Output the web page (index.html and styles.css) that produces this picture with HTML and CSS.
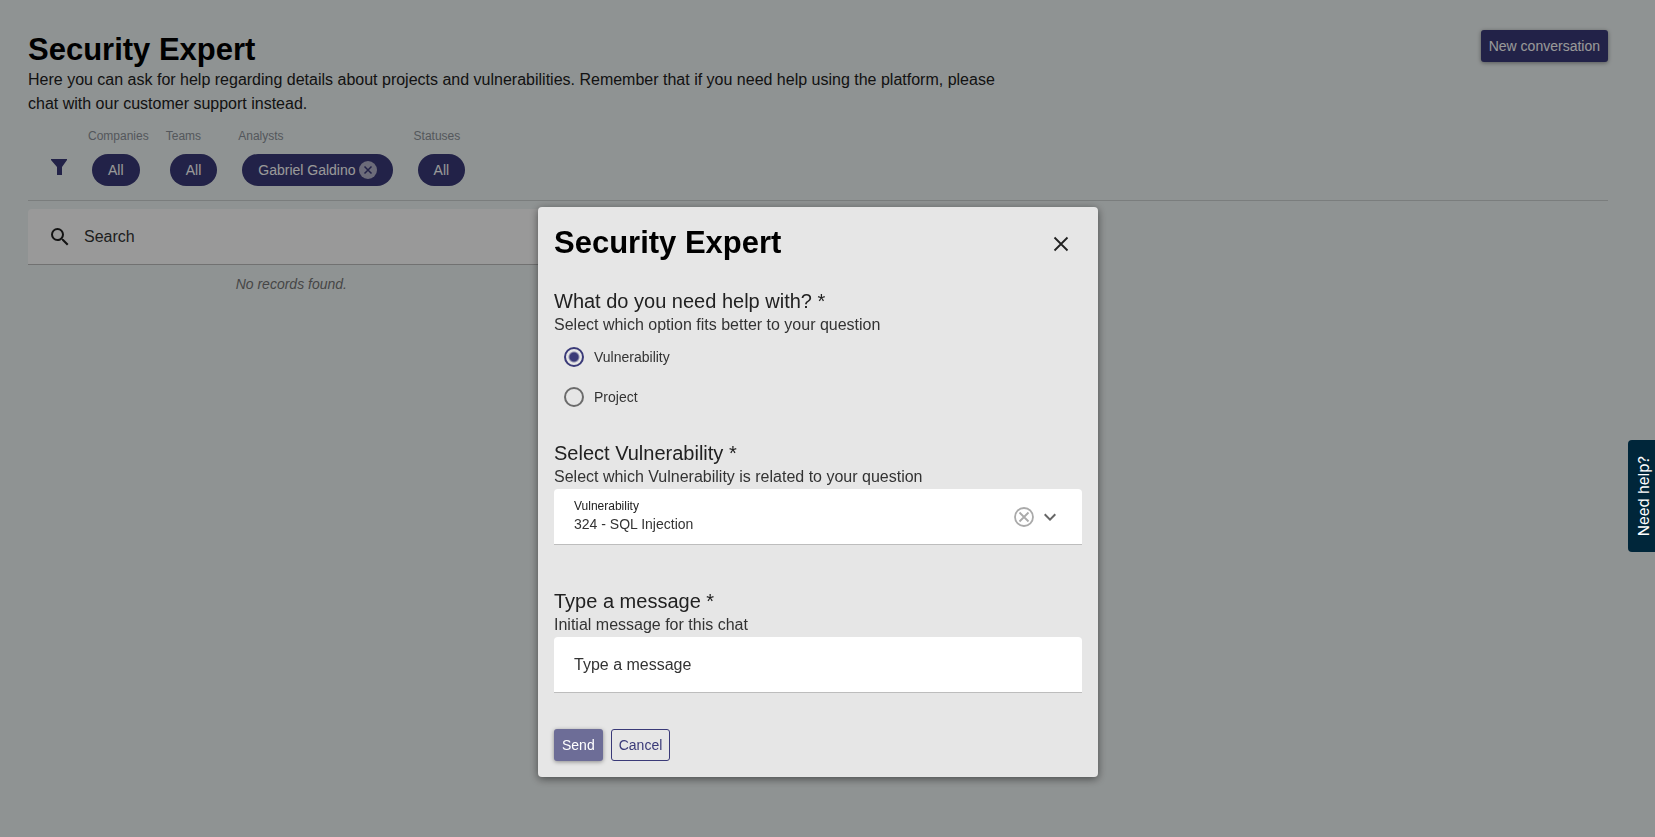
FILE: index.html
```html
<!DOCTYPE html>
<html lang="en">
<head>
<meta charset="utf-8">
<title>Security Expert</title>
<link rel="stylesheet" href="styles.css">
</head>
<body>
<main class="page">
  <header class="page-header">
    <div class="intro">
      <h1 class="title">Security Expert</h1>
      <p class="lead">Here you can ask for help regarding details about projects and vulnerabilities. Remember that if you need help using the platform, please chat with our customer support instead.</p>
    </div>
    <button class="btn btn-primary" type="button">New conversation</button>
  </header>
  <section class="filters">
    <svg class="filter-icon" viewBox="0 0 24 24" aria-hidden="true"><path d="M4 4h16v1l-5 7v8h-5v-8L4 5z"/></svg>
    <div class="filter"><span class="filter-label">Companies</span><button class="chip" type="button">All</button></div>
    <div class="filter"><span class="filter-label">Teams</span><button class="chip" type="button">All</button></div>
    <div class="filter"><span class="filter-label">Analysts</span><button class="chip" type="button">Gabriel Galdino<svg class="chip-remove" viewBox="0 0 18 18" aria-hidden="true"><circle cx="9" cy="9" r="9"/><path d="M5.5 5.5l7 7M12.5 5.5l-7 7"/></svg></button></div>
    <div class="filter"><span class="filter-label">Statuses</span><button class="chip" type="button">All</button></div>
  </section>
  <section class="list">
    <label class="search">
      <svg class="search-icon" viewBox="0 0 24 24" aria-hidden="true"><path d="M15.5 14h-.79l-.28-.27A6.471 6.471 0 0 0 16 9.5 6.5 6.5 0 1 0 9.5 16c1.61 0 3.09-.59 4.23-1.57l.27.28v.79l5 4.99L20.49 19l-4.99-5zm-6 0C7.01 14 5 11.99 5 9.5S7.01 5 9.5 5 14 7.01 14 9.5 11.99 14 9.5 14z"/></svg>
      <input class="search-input" type="search" placeholder="Search" aria-label="Search">
    </label>
    <p class="empty">No records found.</p>
  </section>
</main>

<div class="overlay">
  <form class="dialog" role="dialog" aria-modal="true" aria-labelledby="dialog-title">
    <header class="dialog-header">
      <h2 class="title" id="dialog-title">Security Expert</h2>
      <button class="close" type="button" aria-label="Close"><svg viewBox="0 0 24 24"><path d="M5.5 5.5l13 13M18.5 5.5l-13 13"/></svg></button>
    </header>
    <section class="question">
      <h3 class="heading">What do you need help with? *</h3>
      <p class="hint">Select which option fits better to your question</p>
      <label class="option"><input class="radio" type="radio" name="topic" checked>Vulnerability</label>
      <label class="option"><input class="radio" type="radio" name="topic">Project</label>
    </section>
    <section class="question">
      <h3 class="heading">Select Vulnerability *</h3>
      <p class="hint">Select which Vulnerability is related to your question</p>
      <div class="field">
        <div class="field-body">
          <label class="field-label" for="vulnerability">Vulnerability</label>
          <select class="field-select" id="vulnerability"><option>324 - SQL Injection</option></select>
        </div>
        <button class="clear" type="button" aria-label="Clear"><svg viewBox="0 0 24 24"><circle cx="12" cy="12" r="9"/><path d="M7.5 7.5l9 9M16.5 7.5l-9 9"/></svg></button>
        <svg class="chevron" viewBox="0 0 24 24" aria-hidden="true"><path d="M7.41 8.59L12 13.17l4.59-4.58L18 10l-6 6-6-6z"/></svg>
      </div>
      <div class="field-note"></div>
    </section>
    <section class="question">
      <h3 class="heading">Type a message *</h3>
      <p class="hint">Initial message for this chat</p>
      <div class="field"><input class="field-input" type="text" placeholder="Type a message" aria-label="Type a message"></div>
      <div class="field-note"></div>
    </section>
    <footer class="actions">
      <button class="btn btn-muted" type="submit">Send</button>
      <button class="btn btn-outline" type="button">Cancel</button>
    </footer>
  </form>
</div>
<button class="help-tab" type="button">Need help?</button>
</body>
</html>
```
FILE: styles.css
```css
:root {
  --primary: #3a3a78;
  --text: #212121;
}
* { box-sizing: border-box; }
body {
  margin: 0;
  min-height: 100vh;
  background: #eff5f5;
  color: var(--text);
  font: 16px/24px "Liberation Sans", Arial, sans-serif;
}
h1, h2, h3, p { margin: 0; }
button, input, select { font: inherit; color: inherit; }
button { cursor: pointer; }
svg { display: block; fill: currentColor; }

.page { padding: 30px 47px 30px 28px; }
.page-header {
  display: flex;
  justify-content: space-between;
  align-items: flex-start;
}
.intro { flex: 0 1 62%; }
.title {
  padding-top: 2px;
  color: #000;
  font-size: 31px;
  line-height: 36px;
  font-weight: 700;
}
.btn {
  height: 32px;
  padding: 0 8px;
  border: 0;
  border-radius: 3px;
  font-size: 14px;
  line-height: 20px;
}
.btn-primary, .btn-muted {
  color: #fff;
  box-shadow: 0 1px 4px rgba(0, 0, 0, .4);
}
.btn-primary { background: var(--primary); }
.btn-muted { background: #6d6d97; }
.btn-outline {
  border: 1px solid var(--primary);
  background: transparent;
  color: var(--primary);
  padding: 0 7px;
}

.filters {
  display: flex;
  align-items: flex-start;
  gap: 17px;
  padding: 12px 0 14px 19px;
  border-bottom: 1px solid #ccd1d1;
}
.filter-icon {
  width: 24px;
  height: 24px;
  margin-top: 27px;
  color: var(--primary);
}
.filter {
  display: flex;
  flex-direction: column;
  align-items: flex-start;
  gap: 10px;
}
.filter-label {
  color: #8c9299;
  font-size: 12px;
  line-height: 16px;
}
.chip {
  display: flex;
  align-items: center;
  gap: 3px;
  height: 32px;
  margin: 0 4px;
  padding: 0 16px;
  border: 0;
  border-radius: 16px;
  background: var(--primary);
  color: #fff;
  font-size: 14px;
  line-height: 20px;
}
.chip-remove { width: 18px; height: 18px; fill: #b5b4cc; }
.chip-remove path { stroke: var(--primary); stroke-width: 1.5; }

.list { width: 33.33%; margin-top: 8px; }
.search {
  display: flex;
  align-items: center;
  gap: 12px;
  height: 56px;
  padding: 0 20px;
  border-bottom: 1px solid #bdbdbd;
  border-radius: 4px 4px 0 0;
  background: #fff;
}
.search-icon { width: 24px; height: 24px; }
.search-input {
  flex: 1;
  min-width: 0;
  padding: 0;
  border: 0;
  outline: 0;
  background: transparent;
}
::placeholder { color: #333; opacity: 1; }
.empty {
  padding-top: 9px;
  color: #757575;
  font-size: 14px;
  line-height: 20px;
  font-style: italic;
  text-align: center;
}

.overlay {
  position: fixed;
  inset: 0;
  display: flex;
  justify-content: center;
  align-items: flex-start;
  padding: 207px 19px 0 0;
  background: rgba(0, 0, 0, .4);
}
.dialog {
  width: 560px;
  padding: 16px;
  border-radius: 4px;
  background: #e6e6e6;
  box-shadow: 0 2px 8px rgba(0, 0, 0, .5);
}
.dialog-header {
  display: flex;
  justify-content: space-between;
  align-items: flex-end;
  margin-bottom: 28px;
}
.close, .clear {
  display: flex;
  padding: 0;
  border: 0;
  background: transparent;
}
.close { padding: 0 9px 5px 0; }
.close svg, .clear svg {
  width: 24px;
  height: 24px;
  fill: none;
  stroke: currentColor;
  stroke-width: 1.8;
}
.question + .question { margin-top: 24px; }
.heading {
  font-size: 20px;
  line-height: 24px;
  font-weight: 400;
}
.hint { color: #333; }
.option {
  display: flex;
  align-items: center;
  gap: 10px;
  width: max-content;
  height: 40px;
  padding-left: 10px;
  color: #333;
  font-size: 14px;
  line-height: 20px;
}
.radio {
  appearance: none;
  width: 20px;
  height: 20px;
  margin: 0;
  border: 2px solid #6b6b6b;
  border-radius: 50%;
}
.radio:checked {
  border-color: var(--primary);
  background: radial-gradient(circle, var(--primary) 4px, transparent 6px);
}
.field {
  display: flex;
  align-items: center;
  height: 56px;
  padding: 0 20px;
  border-bottom: 1px solid #bdbdbd;
  border-radius: 4px 4px 0 0;
  background: #fff;
}
.field-body { flex: 1; display: flex; flex-direction: column; }
.field-label { font-size: 12px; line-height: 16px; }
.field-select {
  appearance: none;
  height: 20px;
  margin-bottom: 2px;
  padding: 0;
  border: 0;
  background: transparent;
  color: #333;
  font-size: 14px;
  line-height: 20px;
}
.field-input {
  flex: 1;
  padding: 0;
  border: 0;
  outline: 0;
  background: transparent;
}
.clear { color: #aaa; }
.chevron { width: 24px; height: 24px; margin-left: 2px; color: #666; }
.field-note { height: 20px; }
.actions { display: flex; gap: 8px; margin-top: 16px; }

.help-tab {
  position: fixed;
  top: 440px;
  right: 0;
  width: 27px;
  height: 112px;
  padding: 0 0 0 4px;
  border: 0;
  border-radius: 4px 0 0 4px;
  background: #00263a;
  color: #fff;
  font: 400 15px/20px Inter, sans-serif;
  writing-mode: sideways-lr;
}
```
